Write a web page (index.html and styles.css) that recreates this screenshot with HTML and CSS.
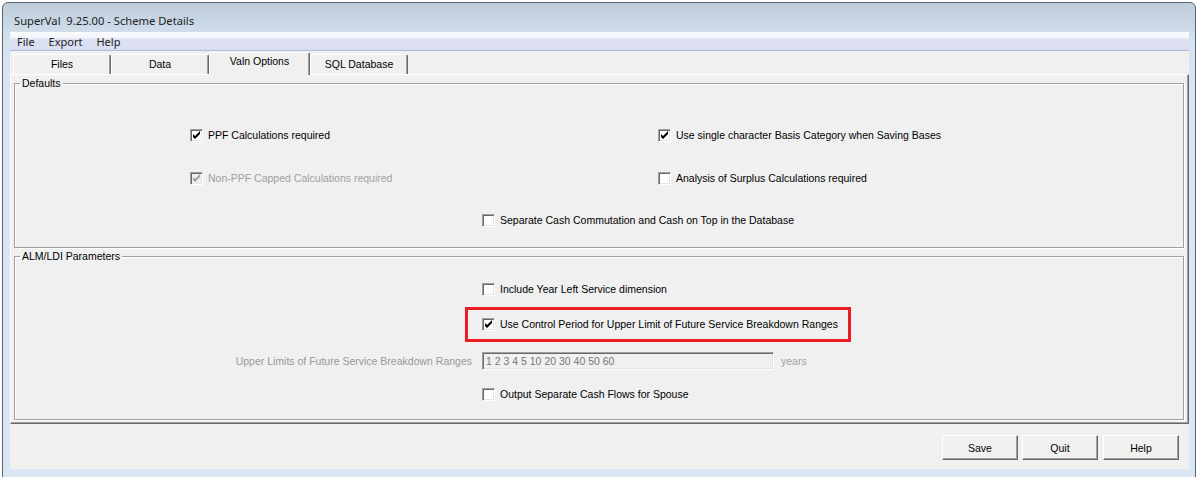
FILE: index.html
```html
<!DOCTYPE html>
<html>
<head>
<meta charset="utf-8">
<title>SuperVal 9.25.00 - Scheme Details</title>
<link rel="stylesheet" href="styles.css">
</head>
<body>
<div class="window">
  <div class="titlebar">SuperVal&nbsp; 9.25.00 - Scheme Details</div>
  <div class="client">
    <div class="menubar"><span class="menu-item">File</span><span class="menu-item">Export</span><span class="menu-item">Help</span></div>
    <div class="tabs">
      <div class="tab tab-files">Files</div>
      <div class="tab tab-data">Data</div>
      <div class="tab tab-valn active">Valn Options</div>
      <div class="tab tab-sql">SQL Database</div>
    </div>
    <div class="panel">
      <div class="group group-defaults">
        <div class="group-title">Defaults</div>
        <div class="rows rows-defaults">
          <div class="row row-two">
            <label class="check"><span class="box checked"><svg viewBox="0 0 11 11"><path d="M2 4 L4 6 L9 1 L9 4 L4 9 L2 7 Z"/></svg></span><span>PPF Calculations required</span></label>
            <label class="check"><span class="box checked"><svg viewBox="0 0 11 11"><path d="M2 4 L4 6 L9 1 L9 4 L4 9 L2 7 Z"/></svg></span><span>Use single character Basis Category when Saving Bases</span></label>
          </div>
          <div class="row row-two">
            <label class="check disabled"><span class="box checked"><svg viewBox="0 0 11 11"><path d="M2 4 L4 6 L9 1 L9 4 L4 9 L2 7 Z"/></svg></span><span>Non-PPF Capped Calculations required</span></label>
            <label class="check"><span class="box"></span><span>Analysis of Surplus Calculations required</span></label>
          </div>
          <div class="row row-mid">
            <label class="check"><span class="box"></span><span>Separate Cash Commutation and Cash on Top in the Database</span></label>
          </div>
        </div>
      </div>
      <div class="group group-alm">
        <div class="group-title">ALM/LDI Parameters</div>
        <div class="rows rows-alm">
          <div class="row row-mid">
            <label class="check"><span class="box"></span><span>Include Year Left Service dimension</span></label>
          </div>
          <div class="row row-mid">
            <div class="highlight">
              <label class="check"><span class="box checked"><svg viewBox="0 0 11 11"><path d="M2 4 L4 6 L9 1 L9 4 L4 9 L2 7 Z"/></svg></span><span>Use Control Period for Upper Limit of Future Service Breakdown Ranges</span></label>
            </div>
          </div>
          <div class="row row-field">
            <span class="field-label">Upper Limits of Future Service Breakdown Ranges</span>
            <span class="textbox">1 2 3 4 5 10 20 30 40 50 60</span>
            <span class="unit">years</span>
          </div>
          <div class="row row-mid">
            <label class="check"><span class="box"></span><span>Output Separate Cash Flows for Spouse</span></label>
          </div>
        </div>
      </div>
    </div>
    <div class="buttons">
      <button class="btn btn-save">Save</button>
      <button class="btn btn-quit">Quit</button>
      <button class="btn">Help</button>
    </div>
  </div>
</div>
</body>
</html>
```

FILE: styles.css
```css
* { box-sizing: border-box; }
html, body { margin: 0; padding: 0; }
body {
  width: 1196px;
  height: 477px;
  overflow: hidden;
  background: #ffffff;
  font-family: "Liberation Sans", Arial, sans-serif;
  font-size: 10.5px;
  color: #000;
}
.window {
  margin: 2px 0 0 2px;
  width: 1194px;
  height: 490px;
  border: 1px solid #596470;
  border-radius: 6px 6px 0 0;
  background: linear-gradient(to bottom, #bfccda 0px, #cad7e5 20px, #d6e2f0 40px, #dae5f3 80px, #dbe6f4 100%);
  padding: 0 6px 0 7px;
  display: flex;
  flex-direction: column;
}
.titlebar {
  height: 29px;
  padding: 11px 0 0 4px;
  font-family: "Noto Sans", "Open Sans", sans-serif;
  font-size: 11.2px;
  line-height: 14px;
  color: #1e1e1e;
  white-space: pre;
}
.client {
  width: 1179px;
  height: 437px;
  background: #f0f0f0;
  display: flex;
  flex-direction: column;
}
.menubar {
  height: 19px;
  background: linear-gradient(to bottom, #fbfcfe 0px, #f2f4fa 6px, #dde1f2 7px, #dadef1 100%);
  border-bottom: 1px solid #b5bacf;
  display: flex;
  padding-left: 1px;
  font-family: "Noto Sans", "Open Sans", sans-serif;
  font-size: 11px;
  line-height: 19px;
  color: #222;
}
.menu-item { padding: 0 6px; }
.menu-item + .menu-item { margin-left: 2px; }
.tabs {
  height: 23px;
  display: flex;
  align-items: flex-end;
  padding-left: 3px;
}
.tab {
  height: 20px;
  width: 98px;
  border-top: 1px solid #fff;
  border-left: 1px solid #fff;
  border-right: 1px solid #696969;
  box-shadow: inset -1px 0 0 #a0a0a0;
  border-radius: 2px 2px 0 0;
  text-align: center;
  line-height: 17px;
  padding-top: 1px;
  background: #f0f0f0;
}
.tab-valn {
  width: 101px;
  height: 23px;
  margin-bottom: -1px;
  line-height: 17px;
  padding-top: 0;
  position: relative;
  z-index: 1;
}
.panel {
  height: 350px;
  border-top: 1px solid #fff;
  border-left: 1px solid #fff;
  border-right: 1px solid #696969;
  border-bottom: 1px solid #696969;
  box-shadow: inset -1px -1px 0 #a0a0a0;
  padding: 8px 0 0 3px;
}
.group {
  width: 1170px;
  border: 1px solid #a0a0a0;
  box-shadow: inset 1px 1px 0 #fff, 1px 1px 0 #fff;
}
.group-defaults { height: 165px; }
.group-alm { height: 164px; margin-top: 8px; }
.group-title {
  display: block;
  width: max-content;
  height: 13px;
  margin: -7px 0 0 5px;
  padding: 0 2px;
  line-height: 13px;
  background: #f0f0f0;
}
.rows { display: grid; }
.rows-defaults { padding-top: 23px; grid-template-rows: 44px 42px 42px; }
.rows-alm { padding-top: 9px; grid-template-rows: 35px 35px 38px 28px; }
.row { display: flex; align-items: center; }
.row-two { padding-left: 175px; display: grid; grid-template-columns: 468px auto; align-items: center; }
.row-mid { padding-left: 467px; }
.check { display: flex; align-items: center; gap: 5px; line-height: 13px; white-space: nowrap; }
.check.disabled { color: #a0a0a0; }
.box {
  width: 13px;
  height: 13px;
  flex: none;
  border: 1px solid;
  border-color: #a0a0a0 #fff #fff #a0a0a0;
  box-shadow: inset 1px 1px 0 #696969, inset -1px -1px 0 #e3e3e3;
  background: #fff;
  display: flex;
}
.box svg { width: 11px; height: 11px; }
.box svg path { fill: #000; }
.check.disabled .box { background: #f0f0f0; }
.check.disabled .box svg path { fill: #a0a0a0; }
.highlight {
  margin-left: -17px;
  width: 386px;
  height: 35px;
  border: 3px solid #ed1c24;
  padding-left: 14px;
  display: flex;
  align-items: center;
}
.row-field { padding-left: 0; }
.field-label {
  width: 457px;
  text-align: right;
  color: #999;
  margin-right: 10px;
  white-space: nowrap;
}
.textbox {
  width: 292px;
  height: 18px;
  border: 1px solid;
  border-color: #a0a0a0 #fff #fff #a0a0a0;
  box-shadow: inset 1px 1px 0 #696969, inset -1px -1px 0 #e3e3e3;
  background: #f0f0f0;
  color: #777;
  padding: 0 0 0 3px;
  line-height: 16px;
  margin-right: 7px;
}
.unit { color: #a0a0a0; }
.buttons {
  flex: 1;
  display: flex;
  justify-content: flex-end;
  align-items: flex-start;
  padding: 11px 10px 0 0;
}
.btn {
  width: 76px;
  height: 25px;
  font-family: "Liberation Sans", Arial, sans-serif;
  font-size: 10.5px;
  color: #000;
  background: #f0f0f0;
  border: 1px solid;
  border-color: #fff #696969 #696969 #fff;
  box-shadow: inset -1px -1px 0 #a0a0a0;
  padding: 0;
  margin: 0;
}
.btn-save { margin-right: 4px; }
.btn-quit { margin-right: 5px; }
```
